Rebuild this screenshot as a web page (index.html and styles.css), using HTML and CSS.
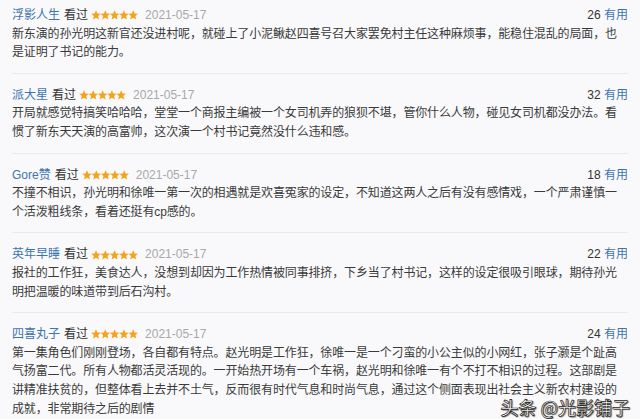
FILE: index.html
```html
<!DOCTYPE html>
<html lang="zh-CN">
<head>
    <meta charset="UTF-8">
    <meta name="viewport" content="width=device-width, initial-scale=1.0">
    <title>短评</title>
    <link rel="stylesheet" href="styles.css">
</head>
<body>
    <svg class="defs" width="0" height="0">
        <defs>
            <polygon id="star" points="5,0.2 6.4,3.4 9.8,3.7 7.2,6 8,9.5 5,7.7 2,9.5 2.8,6 0.2,3.7 3.6,3.4"/>
        </defs>
    </svg>

    <ul class="comment-list">
        <li class="comment first">
            <div class="comment-head">
                <a class="user">浮影人生</a>
                <span class="status">看过</span>
                <svg class="stars" width="47" height="10" viewBox="0 0 47 10"><use href="#star" x="0"/><use href="#star" x="9.3"/><use href="#star" x="18.6"/><use href="#star" x="27.9"/><use href="#star" x="37.2"/></svg>
                <span class="date">2021-05-17</span>
                <span class="votes"><span class="count">26</span> <a class="useful">有用</a></span>
            </div>
            <p class="comment-text">新东演的孙光明这新官还没进村呢，就碰上了小泥鳅赵四喜号召大家罢免村主任这种麻烦事，能稳住混乱的局面，也是证明了书记的能力。</p>
        </li>
        <li class="comment">
            <div class="comment-head">
                <a class="user">派大星</a>
                <span class="status">看过</span>
                <svg class="stars" width="47" height="10" viewBox="0 0 47 10"><use href="#star" x="0"/><use href="#star" x="9.3"/><use href="#star" x="18.6"/><use href="#star" x="27.9"/><use href="#star" x="37.2"/></svg>
                <span class="date">2021-05-17</span>
                <span class="votes"><span class="count">32</span> <a class="useful">有用</a></span>
            </div>
            <p class="comment-text">开局就感觉特搞笑哈哈哈，堂堂一个商报主编被一个女司机弄的狼狈不堪，管你什么人物，碰见女司机都没办法。看惯了新东天天演的高富帅，这次演一个村书记竟然没什么违和感。</p>
        </li>
        <li class="comment">
            <div class="comment-head">
                <a class="user">Gore赞</a>
                <span class="status">看过</span>
                <svg class="stars" width="47" height="10" viewBox="0 0 47 10"><use href="#star" x="0"/><use href="#star" x="9.3"/><use href="#star" x="18.6"/><use href="#star" x="27.9"/><use href="#star" x="37.2"/></svg>
                <span class="date">2021-05-17</span>
                <span class="votes"><span class="count">18</span> <a class="useful">有用</a></span>
            </div>
            <p class="comment-text">不撞不相识，孙光明和徐唯一第一次的相遇就是欢喜冤家的设定，不知道这两人之后有没有感情戏，一个严肃谨慎一个活泼粗线条，看着还挺有cp感的。</p>
        </li>
        <li class="comment">
            <div class="comment-head">
                <a class="user">英年早睡</a>
                <span class="status">看过</span>
                <svg class="stars" width="47" height="10" viewBox="0 0 47 10"><use href="#star" x="0"/><use href="#star" x="9.3"/><use href="#star" x="18.6"/><use href="#star" x="27.9"/><use href="#star" x="37.2"/></svg>
                <span class="date">2021-05-17</span>
                <span class="votes"><span class="count">22</span> <a class="useful">有用</a></span>
            </div>
            <p class="comment-text">报社的工作狂，美食达人，没想到却因为工作热情被同事排挤，下乡当了村书记，这样的设定很吸引眼球，期待孙光明把温暖的味道带到后石沟村。</p>
        </li>
        <li class="comment">
            <div class="comment-head">
                <a class="user">四喜丸子</a>
                <span class="status">看过</span>
                <svg class="stars" width="47" height="10" viewBox="0 0 47 10"><use href="#star" x="0"/><use href="#star" x="9.3"/><use href="#star" x="18.6"/><use href="#star" x="27.9"/><use href="#star" x="37.2"/></svg>
                <span class="date">2021-05-17</span>
                <span class="votes"><span class="count">24</span> <a class="useful">有用</a></span>
            </div>
            <p class="comment-text">第一集角色们刚刚登场，各自都有特点。赵光明是工作狂，徐唯一是一个刁蛮的小公主似的小网红，张子灏是个趾高气扬富二代。所有人物都活灵活现的。一开始热开场有一个车祸，赵光明和徐唯一有个不打不相识的过程。这部剧是讲精准扶贫的，但整体看上去并不土气，反而很有时代气息和时尚气息，通过这个侧面表现出社会主义新农村建设的成就，非常期待之后的剧情</p>
        </li>
    </ul>

    <div class="watermark">头条 @光影铺子</div>
</body>
</html>
```

FILE: styles.css
```css
html, body {
    margin: 0;
    padding: 0;
    height: 419px;
    overflow: hidden;
}
body {
    position: relative;
    background: #f9f9fb;
    font-family: "Liberation Sans", "Noto Sans CJK SC", sans-serif;
    font-size: 12px;
    color: #3a3a3a;
}
.defs {
    position: absolute;
}
.comment-list {
    list-style-type: none;
    margin: 0;
    padding: 0 12px;
}
.comment {
    padding: 12px 0 11px;
    border-bottom: 1px solid #ebebee;
    line-height: 18.6px;
}
.comment.first {
    padding-top: 6px;
}
.comment-head {
    display: flex;
    align-items: center;
    height: 18.6px;
}
.user {
    color: #3c74ad;
}
.status {
    margin-left: 4px;
    color: #333;
}
.stars {
    margin-left: 3px;
    fill: #f5a31f;
}
.date {
    margin-left: 7px;
    color: #a8a8a8;
}
.votes {
    margin-left: auto;
    white-space: pre;
}
.count {
    color: #333;
}
.useful {
    color: #3c74ad;
}
.comment-text {
    margin: 0;
    padding-right: 1px;
    letter-spacing: -0.14px;
    line-break: anywhere;
    text-spacing-trim: space-all;
    color: #3a3a3a;
}
.watermark {
    position: absolute;
    right: 10px;
    bottom: 1px;
    font-family: "Noto Sans CJK SC", sans-serif;
    font-size: 18px;
    font-weight: 500;
    line-height: 22px;
    color: #fff;
    -webkit-text-stroke: 0.7px #222;
    text-shadow: 1px 1px 1px rgba(0, 0, 0, 0.6);
}
```
